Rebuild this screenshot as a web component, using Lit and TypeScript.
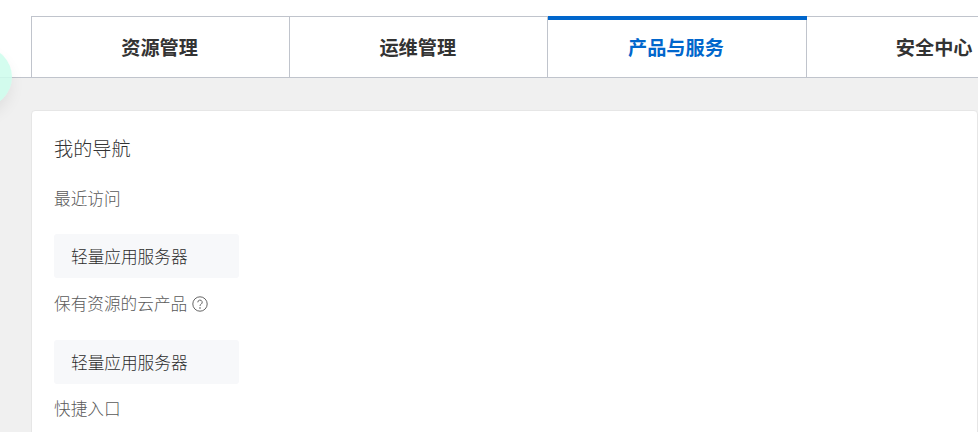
import { LitElement, css, html } from 'lit'
import { customElement } from 'lit/decorators.js'

const tabs = ['资源管理', '运维管理', '产品与服务', '安全中心']

@customElement('app-root')
export class AppRoot extends LitElement {
  static styles = css`
    :host {
      display: block;
      width: 978px;
      height: 432px;
      overflow: hidden;
      position: relative;
      background: #f0f0f0;
      font-family: 'Noto Sans CJK SC', 'Liberation Sans', sans-serif;
    }
    .tabs {
      display: flex;
      background: #fff;
      height: 61px;
      padding-left: 31px;
      padding-top: 16px;
      border-bottom: 1px solid #c0c4cc;
    }
    .tab {
      flex: 0 0 258.2px;
      box-sizing: border-box;
      position: relative;
      padding-right: 2px;
      border-top: 1px solid #c0c4cc;
      border-left: 1px solid #c0c4cc;
      display: flex;
      align-items: center;
      justify-content: center;
      font-size: 19.2px;
      font-weight: 700;
      color: #333;
    }
    .tab.active { color: #0066cc; }
    /* blue bar runs over the neighbour's left border */
    .tab.active::before {
      content: '';
      position: absolute;
      top: -1px;
      left: 0;
      right: -1px;
      height: 4px;
      background: #0066cc;
      z-index: 1;
    }
    .card {
      margin: 32px 0 0 31px;
      background: #fff;
      border: 1px solid #e6e6e6;
      border-radius: 4px;
      padding: 25px 22px;
      height: 400px;
    }
    .title {
      font-size: 19.2px;
      font-weight: 300;
      line-height: 24px;
      color: #333;
    }
    .label {
      font-size: 16.67px;
      font-weight: 300;
      line-height: 24px;
      color: #595959;
      display: flex;
      align-items: center;
      gap: 5px;
    }
    .first { margin-top: 26px; }
    .second { margin-top: 13px; }
    .third { margin-top: 12px; }
    .chip {
      width: 185px;
      height: 44px;
      box-sizing: border-box;
      padding-left: 17px;
      display: flex;
      align-items: center;
      background: #f7f8fa;
      border-radius: 3px;
      font-size: 16.67px;
      font-weight: 300;
      color: #2b2b2b;
      margin-top: 24px;
    }
    .chip.lower { margin-top: 25px; }
    .help {
      width: 16px;
      height: 16px;
      fill: none;
      stroke: #666;
      position: relative;
      top: 1px;
    }
    .glow {
      position: absolute;
      left: -48px;
      top: 47px;
      width: 60px;
      height: 60px;
      border-radius: 50%;
      background: rgba(205, 253, 236, 0.85);
      box-shadow: -2px 8px 16px rgba(0, 0, 0, 0.08);
    }
  `

  render() {
    return html`
      <div class="tabs">
        ${tabs.map((t, i) => html`<div class="tab ${i === 2 ? 'active' : ''}">${t}</div>`)}
      </div>
      <div class="glow"></div>
      <div class="card">
        <div class="title">我的导航</div>
        <div class="label first">最近访问</div>
        <div class="chip">轻量应用服务器</div>
        <div class="label second">
          保有资源的云产品
          <svg class="help" viewBox="0 0 16 16">
            <circle cx="8" cy="8" r="7.2" />
            <path d="M5.8 6.3a2.2 2.2 0 1 1 3.3 1.9c-.8.4-1.1.9-1.1 1.7" />
            <circle cx="8" cy="12" r=".4" />
          </svg>
        </div>
        <div class="chip lower">轻量应用服务器</div>
        <div class="label third">快捷入口</div>
      </div>
    `
  }
}
